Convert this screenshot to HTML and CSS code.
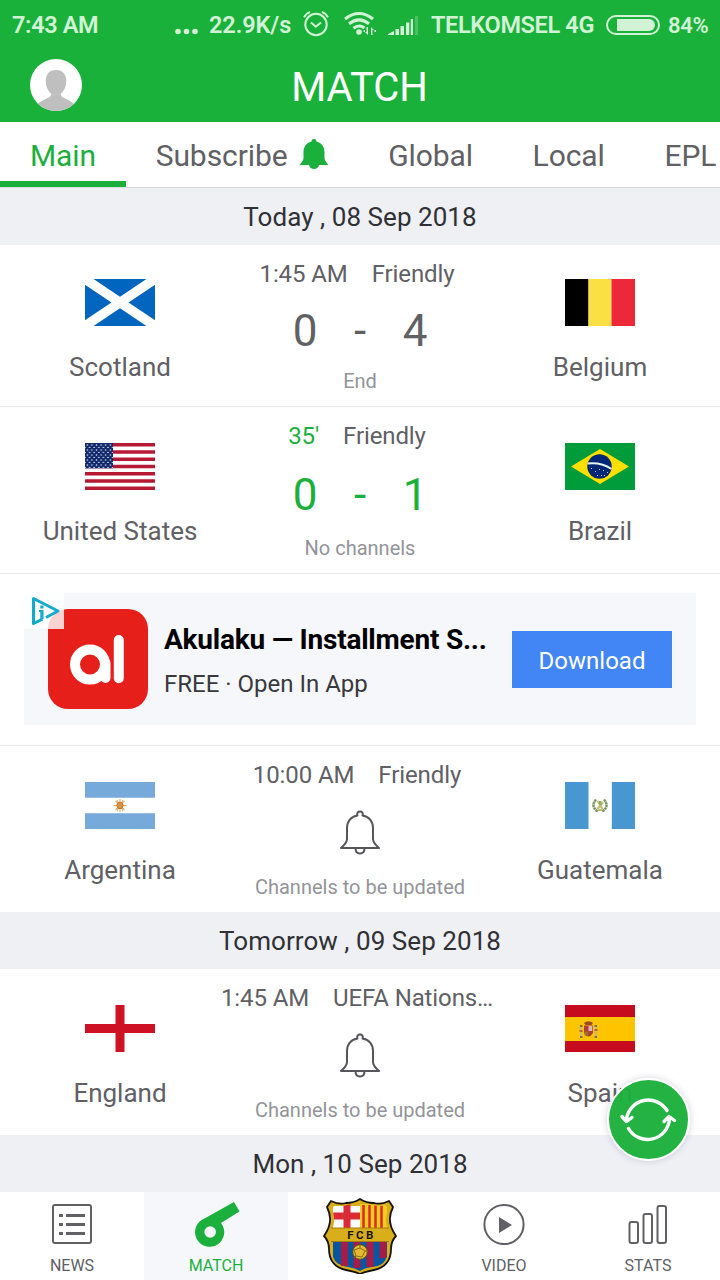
FILE: index.html
```
<!DOCTYPE html>
<html lang="en">
<head>
<meta charset="utf-8">
<title>Match</title>
<link rel="stylesheet" href="styles.css">
</head>
<body>
<div class="app">
  <header class="header">
    <div class="status">
      <span class="clock">7:43 AM</span>
      <svg class="dots" width="24" height="8" viewBox="0 0 24 8"><circle cx="4" cy="3.500" r="2.800"/><circle cx="12.500" cy="3.500" r="2.800"/><circle cx="21" cy="3.500" r="2.800"/></svg>
      <span class="speed">22.9K/s</span>
      <svg class="alarm" width="26" height="26" viewBox="0 0 26 26"><g class="line"><circle cx="13" cy="13.500" r="10.700"/><path d="M8 11.500l4.800 4.200 5.200-4.200M1 6.200Q3 2.500 7 1M25 6.200Q23 2.500 19 1"/></g></svg>
      <svg class="wifi" width="34" height="26" viewBox="0 0 34 26"><g class="arc"><path d="M2 8Q16 -3 30 8M6 12.800Q16 5 26 12.800M10.500 17.300Q16 13 21.500 17"/></g><circle cx="16" cy="21" r="2.800"/><path d="M25 16v8l-3-3h1.500v-5zM28 24v-8l3 3h-1.500v5zM20.500 19h1.500v2h-1.500zM31.500 19H33v2h-1.500z"/></svg>
      <svg class="signal" width="30" height="20" viewBox="0 0 30 20"><path d="M0 20v-1l6-3v4zM7.500 14H11v6H7.500zM12.500 11H16v9h-3.500zM18 7.500h3.300V20H18zM22.800 4H25v16h-2.200z"/><path opacity=".25" d="M27 1h3v19h-3z"/></svg>
      <span class="carrier">TELKOMSEL 4G</span>
      <svg class="battery" width="54" height="20" viewBox="0 0 54 20"><rect class="line" x="1" y="1" width="52" height="18" rx="9"/><path d="M11 4h32a6 6 0 0 1 0 12H11z"/></svg>
      <span class="percent">84%</span>
    </div>
    <div class="titlebar">
      <svg class="avatar" width="52" height="52" viewBox="0 0 52 52"><defs><clipPath id="av"><circle cx="26" cy="26" r="26"/></clipPath></defs><circle cx="26" cy="26" r="26" fill="#fff"/><path clip-path="url(#av)" fill="#bfbfbf" d="M26 11c7 0 10.300 4.800 10.300 11 0 6-2.500 9.700-5.600 13 0 4 5 3.500 13 9.500V54H8V44.500c8-6 13.300-5.500 13.300-9.500-3.200-3.300-5.600-7-5.600-13C15.700 15.800 19 11 26 11z"/></svg>
      <h1 class="title">MATCH</h1>
    </div>
  </header>
  <nav class="tabs">
    <a class="tab active">Main</a>
    <a class="tab subscribe">Subscribe<svg width="30" height="30" viewBox="0 0 30 30"><path fill="#1bb03b" d="M15 0c1.800 0 2.500 1 2.500 2.500C23 4 25.500 8 25.500 13v6c0 2.500 2 4.500 4 7H20c-.5 2.500-2.500 4-5 4s-4.500-1.500-5-4H.5c2-2.500 4-4.500 4-7v-6c0-5 2.500-9 8-10.500C12.500 1 13.200 0 15 0z"/></svg></a>
    <a class="tab">Global</a>
    <a class="tab">Local</a>
    <a class="tab">EPL</a>
  </nav>
  <main class="list">
    <h2 class="day">Today , 08 Sep 2018</h2>
    <section class="match short">
      <div class="team">
        <svg class="flag" viewBox="0 0 70 47"><rect width="70" height="47" fill="#0065bf"/><path d="M0 0l70 47M70 0L0 47" stroke="#fff" stroke-width="9.500"/></svg>
        <span class="name">Scotland</span>
      </div>
      <div class="info">
        <div class="meta"><span>1:45 AM</span><span>Friendly</span></div>
        <div class="score"><span>0</span><span>-</span><span>4</span></div>
        <div class="note">End</div>
      </div>
      <div class="team">
        <svg class="flag" viewBox="0 0 70 47"><path d="M0 0h23.500v47H0z"/><path fill="#fae042" d="M23.500 0h23v47h-23z"/><path fill="#ed2939" d="M46.500 0H70v47H46.500z"/></svg>
        <span class="name">Belgium</span>
      </div>
    </section>
    <section class="match live">
      <div class="team">
        <svg class="flag" viewBox="0 0 70 47"><defs><pattern id="stars" width="4.600" height="5" patternUnits="userSpaceOnUse"><circle cx="2.300" cy="2" r=".8" fill="#dfe5f3"/><circle cx="0" cy="4.500" r=".8" fill="#dfe5f3"/><circle cx="4.600" cy="4.500" r=".8" fill="#dfe5f3"/></pattern></defs><rect width="70" height="47" fill="#fff"/><path stroke="#b51934" stroke-width="3.620" d="M0 1.800h70M0 9.040h70M0 16.270h70M0 23.500h70M0 30.730h70M0 37.960h70M0 45.200h70"/><path fill="#12296b" d="M0 0h28v25.300H0z"/><path fill="url(#stars)" d="M0 0h28v25.300H0z"/></svg>
        <span class="name">United States</span>
      </div>
      <div class="info">
        <div class="meta"><span class="minute">35'</span><span>Friendly</span></div>
        <div class="score"><span>0</span><span>-</span><span>1</span></div>
        <div class="note">No channels</div>
      </div>
      <div class="team">
        <svg class="flag" viewBox="0 0 70 47"><rect width="70" height="47" fill="#009b3a"/><path fill="#fedf00" d="M35 6l29 17.500L35 41 6 23.500z"/><circle cx="34.500" cy="23.500" r="12.200" fill="#002776"/><path d="M22.500 20.500q14-1.500 24 5.500" fill="none" stroke="#e9f2ee" stroke-width="1.800"/><path fill="#b9c7df" d="M26 25h1v1h-1zM30 28h1v1h-1zM34 26h1v1h-1zM38 27h1v1h-1zM42 29h1v1h-1zM36 32h1v1h-1zM32 32h1v1h-1zM39 32h1v1h-1z"/></svg>
        <span class="name">Brazil</span>
      </div>
    </section>
    <aside class="adrow">
      <div class="ad">
        <div class="adicon">
          <svg width="100" height="100" viewBox="0 0 100 100"><rect width="100" height="100" rx="20" fill="#e71f1b"/><circle cx="42" cy="55.500" r="15" fill="none" stroke="#fff" stroke-width="10"/><path d="M57.500 54v15M70.800 31v38.300" stroke="#fff" stroke-width="10" stroke-linecap="round"/></svg>
          <svg class="adchoices" width="40" height="36" viewBox="0 0 40 36"><path fill="#fff" fill-opacity=".8" d="M0 0h40v36H0z"/><path d="M18.500 26.200L9.500 30.500v-25L34 18l-12 6.500" fill="none" stroke="#14aacb" stroke-width="3" stroke-linejoin="round"/><path fill="#14aacb" d="M16.300 12.500h3.200v3h-3.200zM15 17h4.500v9h-3.200v-7H15z"/></svg>
        </div>
        <div class="adtext">
          <div class="adname">Akulaku — Installment S...</div>
          <div class="adsub">FREE · Open In App</div>
        </div>
        <button class="download">Download</button>
      </div>
    </aside>
    <section class="match plain">
      <div class="team">
        <svg class="flag" viewBox="0 0 70 47"><rect width="70" height="47" fill="#75aadb"/><path fill="#fff" d="M0 15.700h70v15.600H0z"/><g stroke="#e3b071" stroke-width="1.100"><path d="M28.500 23.500h13M35 17v13M30.500 19l9 9M39.500 19l-9 9M32 18l6 11M38 18l-6 11"/></g><circle cx="35" cy="23.500" r="3.200" fill="#d7953f" stroke="#b97837"/></svg>
        <span class="name">Argentina</span>
      </div>
      <div class="info">
        <div class="meta"><span>10:00 AM</span><span>Friendly</span></div>
        <div class="remind"><svg width="42" height="46" viewBox="0 0 42 46"><path d="M18.500 5.500C17.500 3 19 1.500 21 1.500s3.500 1.500 2.500 4C30 6.500 34 11.500 34 18v11c0 3.500 2 5.500 6 9H2c4-3.500 6-5.500 6-9V18C8 11.500 12 6.500 18.500 5.500zM16.500 38c0 4 2 5.500 4.500 5.500s4.500-1.500 4.500-5.500"/></svg></div>
        <div class="note">Channels to be updated</div>
      </div>
      <div class="team">
        <svg class="flag" viewBox="0 0 70 47"><rect width="70" height="47" fill="#fff"/><path fill="#4997d0" d="M0 0h23.500v47H0zM46.800 0H70v47H46.800z"/><path d="M31 17.500q-6 7 2 12M39 17.500q6 7-2 12" fill="none" stroke="#80976a" stroke-width="2.600" stroke-dasharray="2.500 .4"/><path d="M32.500 19l5 8M38 20l-5.500 7M33 28h4" stroke="#c6bd75" stroke-width="2.200"/><path d="M34 19h2.500v4H34z" fill="#8eac6b"/></svg>
        <span class="name">Guatemala</span>
      </div>
    </section>
    <h2 class="day">Tomorrow , 09 Sep 2018</h2>
    <section class="match plain">
      <div class="team">
        <svg class="flag" viewBox="0 0 70 47"><rect width="70" height="47" fill="#fff"/><path stroke="#ce1124" stroke-width="9" d="M0 23.500h70M35 0v47"/></svg>
        <span class="name">England</span>
      </div>
      <div class="info">
        <div class="meta"><span>1:45 AM</span><span>UEFA Nations…</span></div>
        <div class="remind"><svg width="42" height="46" viewBox="0 0 42 46"><path d="M18.500 5.500C17.500 3 19 1.500 21 1.500s3.500 1.500 2.500 4C30 6.500 34 11.500 34 18v11c0 3.500 2 5.500 6 9H2c4-3.500 6-5.500 6-9V18C8 11.500 12 6.500 18.500 5.500zM16.500 38c0 4 2 5.500 4.500 5.500s4.500-1.500 4.500-5.500"/></svg></div>
        <div class="note">Channels to be updated</div>
      </div>
      <div class="team">
        <svg class="flag" viewBox="0 0 70 47"><rect width="70" height="47" fill="#c60b1e"/><path fill="#ffc400" d="M0 12h70v24H0z"/><path fill="#9a4a2b" d="M19 18q4.500-3.500 9 0l-1.500 2h-6z"/><path fill="#ad3f2f" d="M19 20.500h9V28q-4.500 7-9 0z"/><path fill="#ddb5bd" d="M23.500 21h3.800v5h-3.800z"/><path fill="#9b7530" d="M19.500 26.500h3.500v4h-3.500z"/><path stroke="#c2b79a" stroke-width="1.800" d="M16.200 21v11M30.800 21v11"/><path stroke="#555d52" stroke-width="1.500" d="M15 32h2.500M29.500 32H32M15 21h2.500M29.500 21H32"/><path stroke="#b34332" stroke-width="1.500" d="M14.500 26h3M29.500 25h3"/></svg>
        <span class="name">Spain</span>
      </div>
    </section>
    <h2 class="day">Mon , 10 Sep 2018</h2>
  </main>
  <nav class="bottom">
    <a class="item"><svg width="42" height="42" viewBox="0 0 42 42"><rect class="ink" x="2" y="2" width="38" height="38" rx="2"/><path stroke="#606065" stroke-width="2.800" d="M8 12.500h4M15 12.500h19M8 21.500h4M15 21.500h19M8 30.500h4M15 30.500h19"/></svg><span>NEWS</span></a>
    <a class="item current"><svg class="whistle" width="46" height="46" viewBox="0 0 46 46"><path fill="#1bb03b" fill-rule="evenodd" d="M40 1l5.500 9.500L27 22a14.600 14.600 0 1 1-16.500-4.500zM16.200 25.200a5.800 5.800 0 1 0 0 11.600 5.800 5.800 0 0 0 0-11.600z"/></svg><span>MATCH</span></a>
    <a class="item club"><svg width="76" height="76" viewBox="0 0 76 76"><defs><clipPath id="crest"><path d="M13 7q6 2 12 0 7-1 13-4 6 3 13 4 6 2 12 0l4 4q-5 8-2 18 2 5 6 10-5 5-5 12c0 13-7 17-16 19q-8 2-12 5-4-3-12-5C17 68 10 64 10 51q0-7-5-12 4-5 6-10 3-10-2-18z"/></clipPath></defs><path fill="#d8ae1a" stroke="#16130d" stroke-width="1.800" stroke-linejoin="round" d="M9 3q8 4 15 2Q32 5 38 1q6 4 14 4 7 2 15-2l4 6q-5 10-2 19 1 4 5 10-5 5-5 13c0 14-8 19-17 21q-10 2-14 4-4-2-14-4C15 70 7 65 7 51q0-8-5-13 4-6 5-10Q10 19 5 9z"/><g clip-path="url(#crest)"><path fill="#fff" d="M11 8h27v22H11z"/><path stroke="#db2b36" stroke-width="7" d="M25 6v24M11 18h27"/><path fill="#f8cb20" d="M38 6h27v24H38z"/><path stroke="#d73229" stroke-width="2.600" d="M41.500 7v23M47.500 7v23M53.500 7v23M59.500 8v22"/><path fill="#0756a0" d="M11 44h54v21q-8 3-15 4-8 1-12 4-5-3-12-4-8-1-15-7z"/><path stroke="#a51c49" stroke-width="7" d="M22.500 44v24M35 44v26M48 44v25M61 44v16"/></g><path stroke="#a57c13" d="M9 30h58M9 43.500h58"/><circle cx="38" cy="54" r="7.300" fill="#e3bb32" stroke="#61501b"/><path d="M32 52l6-2 5 3-3 6-6-1zM38 50v-3M43 53h3M34 58l-2 2" fill="none" stroke="#8c6b17"/><text class="crest-text" x="39.500" y="41">FCB</text></svg></a>
    <a class="item"><svg width="42" height="42" viewBox="0 0 42 42"><circle class="ink" cx="21" cy="21.500" r="19.600"/><path fill="#606065" d="M16 14l13 8-13 8z"/></svg><span>VIDEO</span></a>
    <a class="item"><svg width="42" height="42" viewBox="0 0 42 42"><g class="ink"><rect x="2.500" y="19" width="8.500" height="21" rx="2"/><rect x="16.500" y="11" width="8.500" height="29" rx="2"/><rect x="30.500" y="3" width="8.500" height="37" rx="2"/></g></svg><span>STATS</span></a>
  </nav>
  <button class="refresh" aria-label="Refresh"><svg width="82" height="82" viewBox="0 0 82 82"><g fill="none" stroke="#fff" stroke-width="3.400" stroke-linecap="round" stroke-linejoin="round"><path d="M60 32.500A22 22 0 0 0 19.500 41M15 38.500l4.500 5 5.500-4M21.500 50.500A22 22 0 0 0 62.500 41M57 43.500l5-5 5.500 4"/></g></svg></button>
</div>
</body>
</html>
```
FILE: styles.css
```
* { box-sizing: border-box; }
body { margin: 0; background: #fff; font-family: Roboto, "Noto Sans", sans-serif; color: #606065; }
.app { position: relative; width: 720px; height: 1280px; overflow: hidden; display: flex; flex-direction: column; }
svg { display: block; flex: none; }

.header { height: 122px; flex: none; background: #1ab13b; color: #fff; }
.status { height: 50px; display: flex; align-items: center; font-size: 23.500px; letter-spacing: -.35px; font-weight: 600; color: #d2f2d6; fill: #d2f2d6; white-space: nowrap; }
.status .line { fill: none; stroke: #d2f2d6; stroke-width: 2; }
.arc { fill: none; stroke: #d2f2d6; stroke-width: 3; }
.clock { width: 162px; padding-left: 12px; }
.dots { margin: 13px 11px 0 12px; }
.speed { width: 94px; letter-spacing: -.1px; }
.alarm { margin-top: -3px; }
.wifi { margin: -2px 0 0 14px; }
.signal { margin-left: 11px; }
.carrier { width: 175px; margin-left: 13px; }
.battery { margin-top: -1px; }
.percent { margin-left: 8px; font-size: 22px; }
.titlebar { height: 72px; padding-left: 30px; display: grid; grid-template-columns: 52px 1fr 83px; align-items: center; }
.avatar { margin-top: -3px; }
.title { margin: 4px 0 0; text-align: center; font-size: 40px; line-height: 50px; font-weight: 400; }

.tabs { height: 66px; flex: none; display: flex; border-bottom: 1px solid #dcdde3; font-size: 30px; letter-spacing: -.08px; overflow: hidden; }
.tab { flex: none; height: 65px; padding: 2px 30px 0; line-height: 63px; }
.tab + .tab { margin-left: -.4px; }
.active { color: #1bb03b; border-bottom: 6px solid #1bb03b; }
.subscribe { display: flex; }
.subscribe svg { margin: 15px 0 0 11px; }

.list { flex: none; height: 1004px; }
.day { margin: 0; height: 57px; background: #eef0f4; color: #303036; text-align: center; font-size: 26px; letter-spacing: .05px; line-height: 58px; font-weight: 400; }
.match { display: grid; grid-template-columns: 240px 240px 240px; height: 167px; border-bottom: 1px solid #ececef; }
.team { padding-top: 36px; display: flex; flex-direction: column; align-items: center; }
.flag { width: 70px; height: 47px; }
.name { margin-top: 24px; font-size: 26px; line-height: 34px; white-space: nowrap; }
.info { padding-top: 14px; display: flex; flex-direction: column; align-items: center; }
.meta { display: flex; gap: 24px; margin-right: 6px; font-size: 24px; letter-spacing: -.1px; line-height: 30px; white-space: nowrap; }
.score { display: grid; grid-template-columns: repeat(3, 55px); margin-top: 14px; height: 60px; font-size: 44px; line-height: 60px; text-align: center; }
.note { margin-top: 11px; font-size: 20px; line-height: 24px; color: #929499; white-space: nowrap; }
.short { height: 162px; }
.short .team { padding-top: 34px; }
.short .score { margin-top: 12px; }
.short .note { margin-top: 8px; }
.live .score, .minute { color: #1bb03b; }
.plain { height: 166px; border-bottom: 0; }
.remind { margin-top: 20px; height: 54px; }
.remind path { fill: none; stroke: #55555a; stroke-width: 2; stroke-linejoin: round; }

.adrow { height: 172px; padding: 19px 24px 0; border-bottom: 1px solid #ececef; }
.ad { height: 132px; padding: 0 24px; display: flex; align-items: center; background: #f5f7fb; }
.adicon { position: relative; }
.adchoices { position: absolute; left: -24px; top: -16px; }
.adtext { width: 348px; margin-left: 16px; padding-top: 6px; flex: 1; white-space: nowrap; }
.adname { font-size: 28px; letter-spacing: -.22px; line-height: 42px; font-weight: 700; color: #000; }
.adsub { margin-top: 2px; font-size: 24px; line-height: 42px; color: #39393d; }
.download { width: 160px; height: 57px; margin-top: 1px; padding: 2px 0 0; border: 0; background: #4285f4; color: #fff; font: 24px Roboto, sans-serif; }

.bottom { height: 88px; display: grid; grid-template-columns: repeat(5, 144px); flex: none; }
.item { padding-top: 11px; display: flex; flex-direction: column; align-items: center; font-size: 16px; line-height: 20px; }
.item span { margin-top: 11px; }
.current { background: #f5f7fb; color: #1bb03b; }
.whistle { margin: -2px 0 0 2px; }
.current span { margin-top: 9px; }
.club { padding-top: 6px; }
.ink { fill: none; stroke: #606065; stroke-width: 2; }
.crest-text { font: 700 11.500px Roboto, sans-serif; letter-spacing: 2.500px; text-anchor: middle; fill: #19160f; }
.refresh { position: absolute; left: 607px; top: 1078px; width: 83px; height: 83px; padding: 0; border: 2px solid #fff; border-radius: 50%; background: rgba(27, 176, 59, .96); box-shadow: 0 0 7px rgba(60, 60, 90, .22); }
.refresh svg { margin: -3px -2px -1px; }
```
